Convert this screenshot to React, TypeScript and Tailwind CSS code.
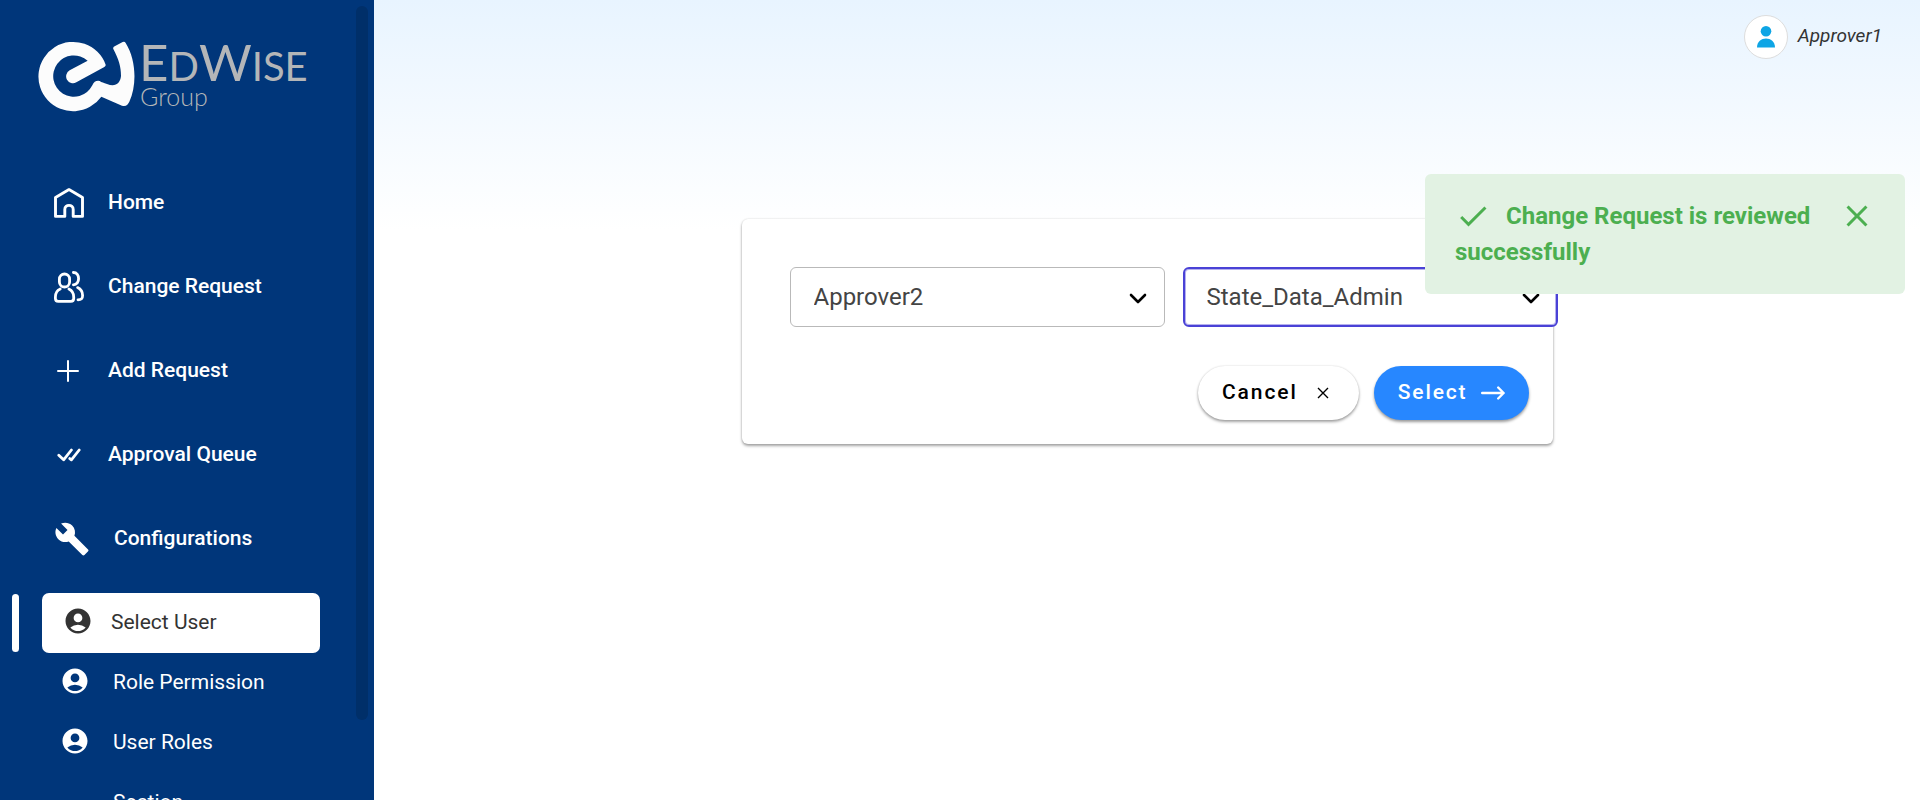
import type { ReactNode } from "react";
import { MdAccountCircle, MdBuild, MdCheck, MdClose } from "react-icons/md";

function LogoMark() {
  return (
    <svg viewBox="110 120 300 216" className="h-[72px] w-[100px] shrink-0" fill="#fcfcfc" aria-hidden="true">
      <path d="M316 194 A104 104 0 1 0 303 290 L365 317 C378 321 383 312 387 305 C410 255 408 180 376 129 Q373 123 367 126 L343 139 Q337 142 339 147 C355 178 362 200 362 228 C360 250 345 262 320 252 C310 249 304 247 298 243 Q283 240 276 256 A62 62 0 1 1 262 182 L208 211 A20 20 0 0 0 228 247 L312 201 Q317 198 316 194Z" />
    </svg>
  );
}

function HomeIcon() {
  return (
    <svg viewBox="0 0 30 30" className="h-[30px] w-[30px]" fill="none" stroke="currentColor" strokeWidth="2.9" strokeLinejoin="round" aria-hidden="true">
      <path d="M15 1.6 L28.5 9.4 V28.4 H19.2 V21.4 C19.2 16 10.8 16 10.8 21.4 V28.4 H1.5 V9.4 Z" />
    </svg>
  );
}

function PeopleIcon() {
  return (
    <svg viewBox="0 0 30 32" className="h-[32px] w-[30px]" fill="none" stroke="currentColor" strokeWidth="2.8" strokeLinecap="round" strokeLinejoin="round" aria-hidden="true">
      <rect x="5.4" y="3" width="10.2" height="13" rx="5.1" />
      <path d="M6.2 18 C3 19.5 1.4 22.6 1.4 26 V27.6 Q1.4 30.4 4.3 30.4 H16.8 Q19.7 30.4 19.7 27.6 V26 C19.7 22.6 18 19.5 14.9 18" />
      <path d="M19.4 1.5 C26.3 1.5 26.3 13.8 19.4 13.8" />
      <path d="M23.6 16.6 C27 18.2 28.6 21.2 28.6 24.6 C28.6 27.6 27.6 28.8 24 28.8" />
    </svg>
  );
}

function PlusIcon() {
  return (
    <svg viewBox="0 0 22 22" className="h-[22px] w-[22px]" stroke="currentColor" strokeWidth="2" strokeLinecap="round" aria-hidden="true">
      <path d="M11 1 V21 M1 11 H21" />
    </svg>
  );
}

function DoubleCheckIcon() {
  return (
    <svg viewBox="0 0 24 14" className="h-[14px] w-[24px]" fill="none" stroke="currentColor" strokeWidth="2.8" strokeLinecap="round" strokeLinejoin="round" aria-hidden="true">
      <path d="M1.8 7.2 L6.6 11.8 L14.4 2 M12.8 10.6 L14.4 11.8 L22.2 2" />
    </svg>
  );
}

function NavItem({ icon, label, wide }: { icon: ReactNode; label: string; wide?: boolean }) {
  return (
    <li>
      <a href="#" className="flex h-[84px] items-center pl-[54px] text-[21px] font-medium text-white">
        <span className={wide ? "flex w-[60px] shrink-0" : "flex w-[54px] shrink-0"}>{icon}</span>
        {label}
      </a>
    </li>
  );
}

function SubItem({ label }: { label: string }) {
  return (
    <li>
      <a href="#" className="flex h-[60px] items-center pl-[60px] text-[21px] text-white">
        <MdAccountCircle className="mb-1 mr-[23px] h-[30px] w-[30px] shrink-0" aria-hidden="true" />
        {label}
      </a>
    </li>
  );
}

function Sidebar() {
  return (
    <aside className="relative h-screen w-[374px] shrink-0 overflow-hidden bg-[#00367a]">
      <div className="flex h-[161px] items-start pl-[37px] pt-10">
        <LogoMark />
        <div className="pl-0.5 font-['Lato',sans-serif] text-[#b4b6b8]">
          <div className="text-[51px] leading-[44px]">
            E<span className="text-[40px]">D</span>W<span className="text-[40px]">ISE</span>
          </div>
          <div className="pl-px text-[25px] font-light leading-4">Group</div>
        </div>
      </div>
      <nav aria-label="Main">
        <ul>
          <NavItem icon={<HomeIcon />} label="Home" />
          <NavItem icon={<PeopleIcon />} label="Change Request" />
          <NavItem icon={<span className="pl-[3px]"><PlusIcon /></span>} label="Add Request" />
          <NavItem icon={<span className="pl-[3px]"><DoubleCheckIcon /></span>} label="Approval Queue" />
          <NavItem wide icon={<MdBuild className="h-9 w-9" aria-hidden="true" />} label="Configurations" />
        </ul>
        <ul className="pt-3">
          <li className="flex items-center pl-3">
            <span className="h-[58px] w-[7px] rounded-full bg-white" />
            <a href="#" aria-current="page" className="ml-[23px] flex h-[60px] w-[278px] items-center rounded-[7px] bg-white pl-[21px] text-[21px] text-[#333333]">
              <MdAccountCircle className="mb-1 mr-[18px] h-[30px] w-[30px] shrink-0" aria-hidden="true" />
              Select User
            </a>
          </li>
          <SubItem label="Role Permission" />
          <SubItem label="User Roles" />
          <li>
            <a href="#" className="flex h-[60px] items-center pl-[113px] text-[21px] text-white">Section</a>
          </li>
        </ul>
      </nav>
      <div className="absolute right-1.5 top-1.5 h-[714px] w-3 rounded-full bg-[#002f69]" />
    </aside>
  );
}

function SelectField({ label, value, focused }: { label: string; value: string; focused?: boolean }) {
  return (
    <div className="relative w-[375px] shrink-0">
      <select
        aria-label={label}
        defaultValue={value}
        className={
          focused
            ? "h-[60px] w-full appearance-none rounded-[6px] border-2 border-[#4a42d6] bg-white px-[22px] text-[24px] text-[#444444] shadow-[inset_0_0_0_1px_#b5b1ee] outline-none"
            : "h-[60px] w-full appearance-none rounded-[6px] border border-[#b9b9b9] bg-white px-[23px] text-[24px] text-[#444444] outline-none"
        }
      >
        <option>{value}</option>
      </select>
      <svg viewBox="0 0 18 12" className="pointer-events-none absolute right-[18px] top-[26px] h-3 w-[18px]" fill="none" stroke="#000" strokeWidth="2.6" strokeLinecap="round" strokeLinejoin="round" aria-hidden="true">
        <path d="M2 2 L9 9 L16 2" />
      </svg>
    </div>
  );
}

export default function App() {
  return (
    <div className="flex min-h-screen bg-white font-['Roboto',sans-serif]">
      <Sidebar />
      <div className="flex min-w-0 grow flex-col bg-[linear-gradient(180deg,#e8f4ff_0px,#ffffff_230px)]">
        <header className="flex h-[74px] items-center justify-end pr-[38px]">
          <span className="flex h-11 w-11 items-center justify-center rounded-full border border-[#dddddd] bg-white">
            <svg viewBox="0 0 18 22" className="h-[22px] w-[18px]" fill="#0ea5e5" aria-hidden="true">
              <circle cx="9" cy="5.3" r="5.3" />
              <path d="M0 21.5 C0 9.5 18 9.5 18 21.5 Z" />
            </svg>
          </span>
          <span className="pb-0.5 pl-2.5 text-[19px] italic text-[#333333]">Approver1</span>
        </header>
        <main className="flex justify-center pt-[145px]">
          <form className="w-[811px] rounded-[6px] bg-white pb-6 pt-12 shadow-[0_2px_3px_rgba(0,0,0,0.35),0_0_2px_rgba(0,0,0,0.15)]">
            <div className="flex gap-[18px] pl-12">
              <SelectField label="User" value="Approver2" />
              <SelectField label="Role" value="State_Data_Admin" focused />
            </div>
            <div className="flex justify-end gap-[15px] pr-6 pt-[39px]">
              <button type="button" className="flex h-[54px] items-center rounded-full bg-white pl-6 pr-[30px] text-[21px] font-medium tracking-[0.09em] text-black shadow-[0_2px_3px_rgba(0,0,0,0.35),0_0_2px_rgba(0,0,0,0.15)]">
                Cancel
                <svg viewBox="0 0 12 12" className="ml-[19px] h-3 w-3" stroke="currentColor" strokeWidth="1.4" aria-hidden="true">
                  <path d="M1 1 L11 11 M11 1 L1 11" />
                </svg>
              </button>
              <button type="submit" className="flex h-[54px] items-center rounded-full bg-[#2787ff] px-6 text-[21px] font-medium tracking-[0.09em] text-white shadow-[0_2px_3px_rgba(0,0,0,0.4)]">
                Select
                <svg viewBox="0 0 24 14" className="ml-[13px] h-3.5 w-6" fill="none" stroke="currentColor" strokeWidth="2.4" strokeLinecap="round" strokeLinejoin="round" aria-hidden="true">
                  <path d="M1.2 7 H22.6 M17.2 1.5 L22.6 7 L17.2 12.5" />
                </svg>
              </button>
            </div>
          </form>
        </main>
      </div>
      <div role="status" className="fixed right-[15px] top-[174px] flex h-[120px] w-[480px] items-start rounded-[6px] bg-[#e2f2e3] px-[30px] pt-6 text-[24px] leading-9 text-[#4caf50]">
        <p className="grow font-bold">
          <MdCheck className="mr-[15px] inline-block h-9 w-9 align-top" aria-hidden="true" />
          Change Request is reviewed successfully
        </p>
        <button type="button" aria-label="Close" className="shrink-0">
          <MdClose className="h-9 w-9" aria-hidden="true" />
        </button>
      </div>
    </div>
  );
}
